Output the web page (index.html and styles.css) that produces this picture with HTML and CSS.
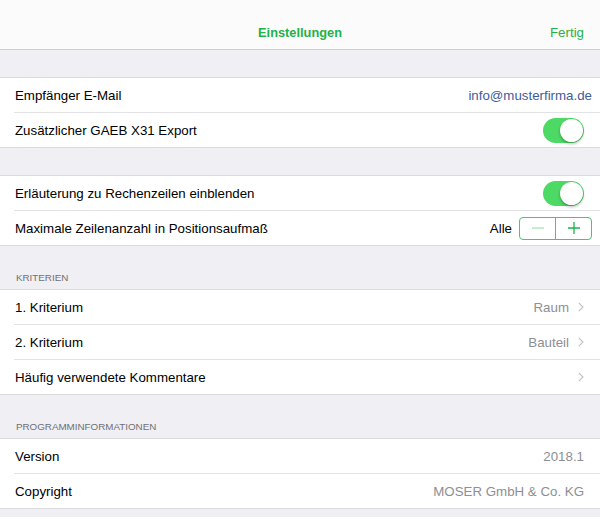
FILE: index.html
```html
<!DOCTYPE html>
<html lang="de">
<head>
<meta charset="utf-8">
<title>Einstellungen</title>
<link rel="stylesheet" href="styles.css">
</head>
<body>
<div class="screen">
  <header class="nav">
    <div class="nav-bar">
      <span class="nav-title">Einstellungen</span>
      <span class="nav-done">Fertig</span>
    </div>
  </header>

  <div class="gap"></div>
  <section class="group">
    <div class="row email-row">
      <span class="label">Empfänger E-Mail</span>
      <span class="value link">info@musterfirma.de</span>
    </div>
    <div class="row">
      <span class="label">Zusätzlicher GAEB X31 Export</span>
      <span class="toggle"><span class="knob"></span></span>
    </div>
  </section>

  <div class="gap"></div>
  <section class="group">
    <div class="row">
      <span class="label">Erläuterung zu Rechenzeilen einblenden</span>
      <span class="toggle"><span class="knob"></span></span>
    </div>
    <div class="row stepper-row">
      <span class="label">Maximale Zeilenanzahl in Positionsaufmaß</span>
      <span class="value dark">Alle</span>
      <span class="stepper">
        <span class="step minus"><svg width="14" height="14" viewBox="0 0 14 14"><path d="M1 7h12" stroke="currentColor" stroke-width="1.3"/></svg></span>
        <span class="step plus"><svg width="14" height="14" viewBox="0 0 14 14"><path d="M1 7h12M7 1v12" stroke="currentColor" stroke-width="1.3"/></svg></span>
      </span>
    </div>
  </section>

  <div class="section-header">KRITERIEN</div>
  <section class="group">
    <div class="row">
      <span class="label">1. Kriterium</span>
      <span class="value">Raum</span>
      <svg class="chev" width="6" height="10" viewBox="0 0 6 10"><path d="M0.8 0.8L5 5L0.8 9.2" fill="none" stroke="currentColor" stroke-width="1.1"/></svg>
    </div>
    <div class="row">
      <span class="label">2. Kriterium</span>
      <span class="value">Bauteil</span>
      <svg class="chev" width="6" height="10" viewBox="0 0 6 10"><path d="M0.8 0.8L5 5L0.8 9.2" fill="none" stroke="currentColor" stroke-width="1.1"/></svg>
    </div>
    <div class="row">
      <span class="label">Häufig verwendete Kommentare</span>
      <svg class="chev" width="6" height="10" viewBox="0 0 6 10"><path d="M0.8 0.8L5 5L0.8 9.2" fill="none" stroke="currentColor" stroke-width="1.1"/></svg>
    </div>
  </section>

  <div class="section-header">PROGRAMMINFORMATIONEN</div>
  <section class="group">
    <div class="row">
      <span class="label">Version</span>
      <span class="value">2018.1</span>
    </div>
    <div class="row">
      <span class="label">Copyright</span>
      <span class="value">MOSER GmbH &amp; Co. KG</span>
    </div>
  </section>
</div>
</body>
</html>
```

FILE: styles.css
```css
* { box-sizing: border-box; }
html, body {
  margin: 0;
  padding: 0;
  background: #efeff4;
}
body {
  font-family: "Liberation Sans", Arial, sans-serif;
  color: #000;
  width: 600px;
  height: 517px;
  overflow: hidden;
}
.screen {
  display: flex;
  flex-direction: column;
}
.nav {
  height: 50px;
  background: #fbfbfb;
  border-bottom: 1px solid #cfcfd2;
  padding-top: 16px;
}
.nav-bar {
  height: 33px;
  position: relative;
  display: flex;
  align-items: center;
  justify-content: center;
}
.nav-title {
  font-size: 12.8px;
  font-weight: bold;
  color: #1fb24a;
}
.nav-done {
  position: absolute;
  right: 16px;
  top: 0;
  height: 33px;
  display: flex;
  align-items: center;
  font-size: 13.3px;
  color: #1fb24a;
}
.gap {
  height: 27px;
}
.group {
  background: #fff;
  border-top: 1px solid #dadade;
  border-bottom: 1px solid #dadade;
}
.row {
  height: 35px;
  display: flex;
  align-items: center;
  padding: 0 16px 0 15px;
  font-size: 13.3px;
}
.row + .row {
  border-top: 1px solid #e3e3e6;
  margin-left: 14px;
  padding-left: 1px;
}
.group .row:first-child { height: 34px; }
.email-row { padding-right: 8px; }
.label {
  flex: 1;
  white-space: nowrap;
}
.value {
  color: #8e8e93;
  white-space: nowrap;
}
.value.link { color: #3f5c9a; }
.value.dark { color: #000; margin-right: 7px; }
.chev {
  color: #c0c0c5;
  margin-left: 9px;
  flex: none;
}
.toggle {
  width: 41px;
  height: 25px;
  border-radius: 13px;
  background: #4cd964;
  position: relative;
  flex: none;
}
.knob {
  position: absolute;
  right: 1px;
  top: 1px;
  width: 23px;
  height: 23px;
  border-radius: 50%;
  background: #fff;
  box-shadow: 0 2px 3px rgba(0,0,0,0.25), 0 0 0 0.5px rgba(0,0,0,0.06);
}
.stepper-row { padding-right: 8px; }
.stepper {
  display: flex;
  width: 73px;
  height: 23px;
  border: 1px solid #45c96a;
  border-radius: 4px;
  flex: none;
}
.step {
  flex: 1;
  display: flex;
  align-items: center;
  justify-content: center;
}
.step.minus { color: #a6e3b5; border-right: 1px solid #45c96a; }
.step.plus { color: #1fb24a; }
.section-header {
  height: 43px;
  display: flex;
  align-items: flex-end;
  padding: 0 0 6px 16px;
  font-size: 9.8px;
  color: #707075;
}
```
